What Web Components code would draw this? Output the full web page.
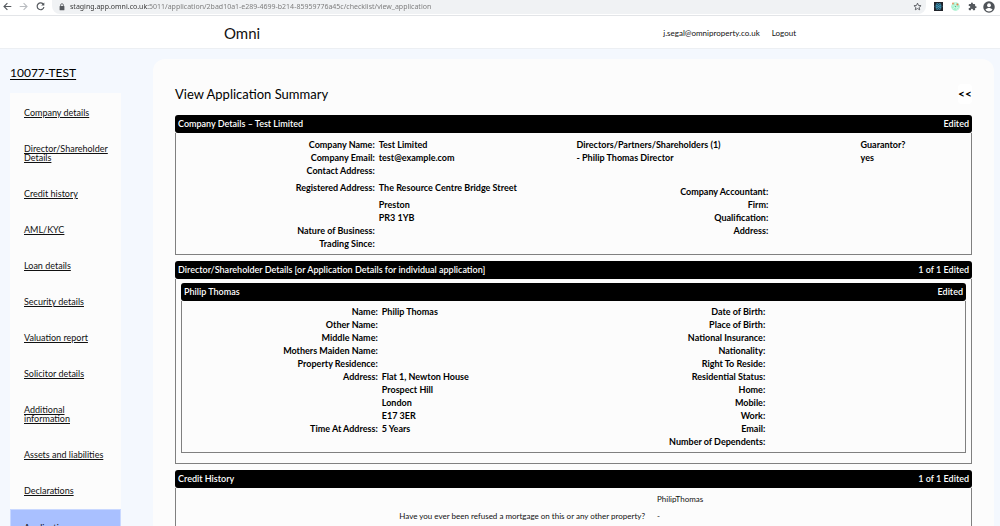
<!DOCTYPE html>
<html lang="en">
<head>
<meta charset="utf-8">
<title>Omni – View Application Summary</title>
<style>
  html, body { height: 100%; margin: 0; }
  body {
    display: flex; flex-direction: column; overflow: hidden;
    background: #f4f8fe; color: #000;
    font: 9px/13px Lato, "Liberation Sans", sans-serif;
  }
</style>
</head>
<body>
<browser-bar></browser-bar>
<site-header brand="Omni" user="j.segal@omniproperty.co.uk"></site-header>
<app-layout>
  <side-nav slot="side" heading="10077-TEST">
    <nav-item>Company details</nav-item>
    <nav-item>Director/Shareholder Details</nav-item>
    <nav-item>Credit history</nav-item>
    <nav-item>AML/KYC</nav-item>
    <nav-item>Loan details</nav-item>
    <nav-item>Security details</nav-item>
    <nav-item>Valuation report</nav-item>
    <nav-item>Solicitor details</nav-item>
    <nav-item>Additional information</nav-item>
    <nav-item>Assets and liabilities</nav-item>
    <nav-item>Declarations</nav-item>
    <nav-item active>Application</nav-item>
  </side-nav>

  <page-title>View Application Summary</page-title>

  <summary-panel heading="Company Details – Test Limited" status="Edited">
    <split-columns>
      <detail-list>
        <dt>Company Name:</dt><dd>Test Limited</dd>
        <dt>Company Email:</dt><dd>test@example.com</dd>
        <dt>Contact Address:</dt><dd></dd>
        <dt class="roomy">Registered Address:</dt><dd class="roomy">The Resource Centre Bridge Street</dd>
        <dd>Preston</dd>
        <dd>PR3 1YB</dd>
        <dt>Nature of Business:</dt><dd></dd>
        <dt>Trading Since:</dt><dd></dd>
      </detail-list>
      <director-table></director-table>
      <detail-list end>
        <dt>Company Accountant:</dt><dd></dd>
        <dt>Firm:</dt><dd></dd>
        <dt>Qualification:</dt><dd></dd>
        <dt>Address:</dt><dd></dd>
      </detail-list>
    </split-columns>
  </summary-panel>

  <summary-panel heading="Director/Shareholder Details [or Application Details for individual application]" status="1 of 1 Edited" group>
    <summary-panel heading="Philip Thomas" status="Edited" nested>
      <split-columns>
        <detail-list>
          <dt>Name:</dt><dd>Philip Thomas</dd>
          <dt>Other Name:</dt><dd></dd>
          <dt>Middle Name:</dt><dd></dd>
          <dt>Mothers Maiden Name:</dt><dd></dd>
          <dt>Property Residence:</dt><dd></dd>
          <dt>Address:</dt><dd>Flat 1, Newton House</dd>
          <dd>Prospect Hill</dd>
          <dd>London</dd>
          <dd>E17 3ER</dd>
          <dt>Time At Address:</dt><dd>5 Years</dd>
        </detail-list>
        <detail-list end>
          <dt>Date of Birth:</dt><dd></dd>
          <dt>Place of Birth:</dt><dd></dd>
          <dt>National Insurance:</dt><dd></dd>
          <dt>Nationality:</dt><dd></dd>
          <dt>Right To Reside:</dt><dd></dd>
          <dt>Residential Status:</dt><dd></dd>
          <dt>Home:</dt><dd></dd>
          <dt>Mobile:</dt><dd></dd>
          <dt>Work:</dt><dd></dd>
          <dt>Email:</dt><dd></dd>
          <dt>Number of Dependents:</dt><dd></dd>
        </detail-list>
      </split-columns>
    </summary-panel>
  </summary-panel>

  <summary-panel heading="Credit History" status="1 of 1 Edited">
    <credit-table></credit-table>
  </summary-panel>
</app-layout>

<script>
const define = (name, markup, setup) => customElements.define(name, class extends HTMLElement {
  connectedCallback() {
    if (this.shadowRoot) return;
    this.attachShadow({ mode: 'open' }).innerHTML = markup;
    if (setup) setup(this, this.shadowRoot);
  }
});

define('browser-bar', `
  <style>
    :host { display: flex; align-items: center; flex: none; height: 15px; overflow: hidden;
      background: #fff; border-bottom: 1px solid #e3e5e8; padding: 0 5px 0 0; }
    svg { display: block; }
    button { border: 0; background: none; padding: 0; margin: 0; height: 12px; flex: none; display: grid; place-items: center; }
    .nav { display: flex; width: 52px; margin-top: -2px; }
    .nav button { width: 17px; }
    .nav button:first-child { width: 14px; }
    .nav button:nth-child(2) { width: 19px; }
    .nav button:nth-child(3) { width: 15px; }
    .address { flex: 1; display: flex; align-items: center; height: 15px; margin-top: -2px; padding: 0 4px 0 7px;
      background: #f0f2f4; border-radius: 0 0 8px 8px; min-width: 0; }
    input { flex: 1; min-width: 0; border: 0; outline: 0; padding: 0; margin: 0 0 0 5px; height: 12px;
      font: 7px/12px "Noto Sans", "Open Sans", sans-serif; color: #777;
      background: linear-gradient(90deg, #333 78px, #777 78px); -webkit-background-clip: text; background-clip: text;
      -webkit-text-fill-color: transparent; }
    .tools { display: flex; gap: 5px; align-items: center; margin: -2px 0 0 6px; flex: none; }
    .tools button { width: 12px; }
  </style>
  <div class="nav">
    <button aria-label="Back"><svg width="9" height="9" viewBox="0 0 9 9" fill="none" stroke="#55595e" stroke-width="1.1"><path d="M8.3 4.5H1.2M4.4 1.1 1 4.5l3.4 3.4"/></svg></button>
    <button aria-label="Forward"><svg width="9" height="9" viewBox="0 0 9 9" fill="none" stroke="#b9bcc0" stroke-width="1.1"><path d="M.7 4.5h7.1M4.6 1.1 8 4.5 4.6 7.9"/></svg></button>
    <button aria-label="Reload"><svg width="9" height="9" viewBox="0 0 9 9" fill="none" stroke="#55595e" stroke-width="1.2"><path d="M7.5 2.6A3.4 3.4 0 1 0 7.9 5"/><path d="M8.3.5v3.1H5.2z" fill="#55595e" stroke="none"/></svg></button>
  </div>
  <div class="address">
    <svg width="6" height="8" viewBox="0 0 6 8"><rect x=".6" y="3" width="4.8" height="4.2" rx=".5" fill="#55595e"/><path d="M1.6 3.2V2.1a1.4 1.4 0 0 1 2.8 0v1.1" fill="none" stroke="#55595e" stroke-width=".8"/></svg>
    <input aria-label="Address" readonly value="staging.app.omni.co.uk:5011/application/2bad10a1-e289-4699-b214-85959776a45c/checklist/view_application">
    <button aria-label="Bookmark"><svg width="9" height="9" viewBox="0 0 24 24" fill="none" stroke="#4a4d51" stroke-width="2.2"><path d="m12 3 2.7 6.2 6.8.6-5.1 4.5 1.5 6.6L12 17.4l-5.9 3.5 1.5-6.6L2.5 9.8l6.800-.6z"/></svg></button>
  </div>
  <div class="tools">
    <button aria-label="React developer tools"><svg width="9" height="9" viewBox="0 0 18 18"><rect width="18" height="18" fill="#20232a"/><g fill="none" stroke="#3fa0c4" stroke-width="1.3"><ellipse cx="9" cy="9" rx="7" ry="2.8"/><ellipse cx="9" cy="9" rx="7" ry="2.8" transform="rotate(60 9 9)"/><ellipse cx="9" cy="9" rx="7" ry="2.8" transform="rotate(120 9 9)"/></g><circle cx="9" cy="9" r="1.5" fill="#3fa0c4"/></svg></button>
    <button aria-label="Extension"><svg width="9" height="9" viewBox="0 0 18 18"><circle cx="9" cy="9" r="8.5" fill="#a6f0cd"/><path d="M2 8c4-1 9 1 14 5M9 1c-1 5 0 11 4 15M3 14l12-9" stroke="#e9fff5" stroke-width="1.3" fill="none"/><circle cx="4" cy="3" r="1.8" fill="#f08c5a"/><circle cx="13" cy="5" r="2" fill="#ef7d4d"/><circle cx="9" cy="9" r="1.5" fill="#4fc48f"/></svg></button>
    <button aria-label="Extensions"><svg width="9" height="9" viewBox="0 0 24 24" fill="#55595e"><path d="M20.5 11H19V7a2 2 0 0 0-2-2h-4V3.5a2.5 2.5 0 0 0-5 0V5H4a2 2 0 0 0-2 2v3.8h1.5a2.7 2.7 0 0 1 0 5.400H2V20a2 2 0 0 0 2 2h3.800v-1.500a2.700 2.700 0 0 1 5.400 0V22H17a2 2 0 0 0 2-2v-4h1.500a2.500 2.500 0 0 0 0-5z"/></svg></button>
    <button aria-label="Profile"><svg width="12" height="12" viewBox="0 0 24 24"><circle cx="12" cy="12" r="11.5" fill="#4f5358"/><circle cx="12" cy="8.5" r="3.8" fill="#fff"/><path d="M4.800 17.300c1.400-2.500 4.800-3.500 7.200-3.500s5.800 1 7.200 3.500a9 9 0 0 1-14.400 0z" fill="#fff"/></svg></button>
  </div>`);

define('site-header', `
  <style>
    :host { display: block; flex: none; background: #fff; border-bottom: 1px solid #eceff3; padding-left: 20px; }
    header { display: flex; align-items: center; max-width: 572px; height: 32px; margin: 0 auto; padding-top: 1px; box-sizing: border-box; }
    a { color: #111; text-decoration: none; }
    .brand { font-size: 15px; line-height: 20px; margin-right: auto; }
    nav { display: flex; gap: 12px; font-size: 8px; line-height: 12px; }
  </style>
  <header><a class="brand" href="#"></a><nav><a class="user" href="#account"></a><a href="#logout">Logout</a></nav></header>`,
  (el, root) => {
    root.querySelector('.brand').textContent = el.getAttribute('brand');
    root.querySelector('.user').textContent = el.getAttribute('user');
  });

define('app-layout', `
  <style>
    :host { flex: 1; min-height: 0; overflow: auto; scrollbar-width: none;
      display: grid; grid-template-columns: 111px minmax(0, 1fr); gap: 32px; padding: 0 6px 0 10px; }
    main { margin-top: 10px; padding: 22px 22px 24px; background: #fcfcfc; border-radius: 12px; }
  </style>
  <slot name="side"></slot><main><slot></slot></main>`);

define('side-nav', `
  <style>
    :host { display: block; }
    h1 { margin: 0; padding: 14px 0 10px; font-size: 12px; line-height: 20px; font-weight: 400; }
    h1 a { color: #000; text-underline-offset: 2px; }
    nav { display: block; background: #fcfcfc; padding-top: 1px; }
  </style>
  <h1><a href="#case"></a></h1><nav><slot></slot></nav>`,
  (el, root) => { root.querySelector('a').textContent = el.getAttribute('heading'); });

define('nav-item', `
  <style>
    :host { display: block; padding: 14px 10px 13px 14px; line-height: 9px; }
    :host([active]) { margin-top: 1px; background: #a9c0ff; outline: 1px solid #c9d8ff; outline-offset: -1px; }
    a { color: #111; text-underline-offset: 1px; }
  </style>
  <a href="#section"><slot></slot></a>`);

define('page-title', `
  <style>
    :host { display: flex; justify-content: space-between; align-items: center; margin-bottom: 8px; }
    h2 { margin: 0; font-size: 13px; line-height: 26px; font-weight: 400; }
    button { border: 0; padding: 0; height: 20px; border-radius: 4px; background: #fff; color: #000;
      font: 700 12px/20px Lato, sans-serif; }
  </style>
  <h2><slot></slot></h2><button aria-label="Collapse">&lt;&lt;</button>`);

define('summary-panel', `
  <style>
    :host { display: block; margin-bottom: 6px; }
    header { display: flex; justify-content: space-between; padding: 0 3px; border-radius: 3px;
      background: #000; color: #fff; font-weight: 600; line-height: 18px; }
    h3 { margin: 0; font: inherit; }
    .body { border: 1px solid #808080; border-top: 0; padding: 5px 0 4px; }
    :host([group]) .body { padding: 4px 5px 10px; }
    :host([nested]) { margin: 0; }
    :host([nested]) .body { padding: 4px 0; }
  </style>
  <section><header><h3></h3><span></span></header><div class="body"><slot></slot></div></section>`,
  (el, root) => {
    root.querySelector('h3').textContent = el.getAttribute('heading');
    root.querySelector('span').textContent = el.getAttribute('status');
  });

define('split-columns', `
  <style>
    :host { display: grid; grid-template-columns: 1fr 1fr; grid-template-rows: auto 1fr; }
    ::slotted(:first-child) { grid-row: 1 / span 2; }
  </style>
  <slot></slot>`);

define('detail-list', `
  <style>
    :host { display: block; font-weight: 700; }
    dl { display: grid; grid-template-columns: 50% 1fr; column-gap: 4px; grid-auto-rows: minmax(13px, auto); margin: 0; }
    :host([end]) dl { grid-template-columns: calc(50% - 4px) 1fr; }
    ::slotted(dt) { grid-column: 1; text-align: right; }
    ::slotted(dd) { grid-column: 2; margin: 0; }
    ::slotted(.roomy) { padding: 4px 0; }
  </style>
  <dl><slot></slot></dl>`);

define('director-table', `
  <style>
    :host { display: block; padding: 0 0 21px 3px; font-weight: 700; }
    table { width: 100%; border-collapse: collapse; table-layout: fixed; }
    th, td { padding: 0; text-align: left; font-weight: 700; line-height: 13px; }
    th:first-child { width: 72%; }
  </style>
  <table>
    <thead><tr><th scope="col">Directors/Partners/Shareholders (1)</th><th scope="col">Guarantor?</th></tr></thead>
    <tbody><tr><td>- Philip Thomas Director</td><td>yes</td></tr></tbody>
  </table>`);

define('credit-table', `
  <style>
    :host { display: block; margin-top: -2px; font-size: 8px; color: #111; }
    table { width: 100%; border-collapse: collapse; table-layout: fixed; }
    th, td { padding: 0 0 0 12px; text-align: left; font-weight: 400; line-height: 17px; }
    th:first-child, td:first-child { width: 59%; padding: 0; text-align: right; }
  </style>
  <table>
    <thead><tr><td></td><th scope="col">PhilipThomas</th></tr></thead>
    <tbody><tr><th scope="row">Have you ever been refused a mortgage on this or any other property?</th><td>-</td></tr></tbody>
  </table>`);
</script>
</body>
</html>
